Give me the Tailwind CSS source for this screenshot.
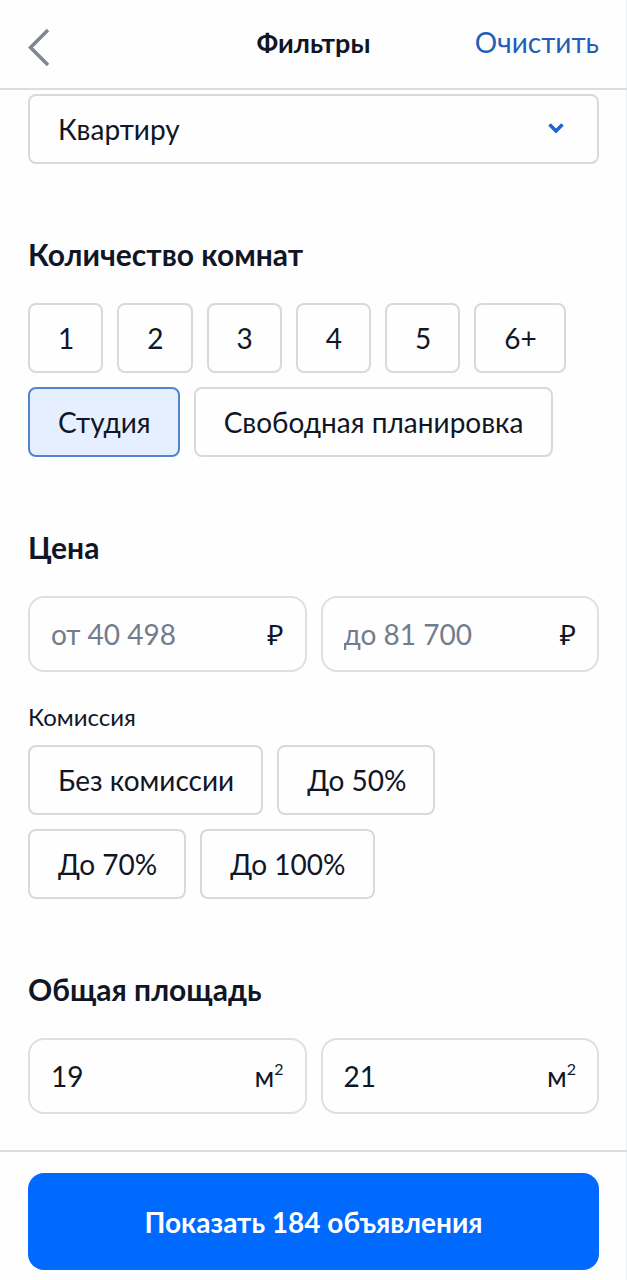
<!DOCTYPE html>
<html lang="ru">
<head>
    <meta charset="UTF-8">
    <meta name="viewport" content="width=device-width, initial-scale=1.0">
    <title>Фильтры</title>
    <script src="https://cdn.jsdelivr.net/npm/@tailwindcss/browser@4"></script>
    <style>
        body { font-family: 'Lato', 'Noto Sans', sans-serif; }
    </style>
</head>
<body class="min-h-screen flex flex-col bg-[#fefefe] text-[#111626] text-[28px] leading-8 shadow-[inset_-1px_0_0_#eef0f2]">

    <header class="grid grid-cols-3 items-center h-[90px] px-7 border-b-2 border-[#d9dee2]">
        <button type="button" aria-label="Назад" class="w-6 pt-1.5">
            <svg class="w-6 h-10" viewBox="0 0 24 40" fill="none" stroke="#808594" stroke-width="3.500">
                <path d="M20 3L2.500 20.500L20 38" />
            </svg>
        </button>
        <h1 class="pb-0.5 text-center font-bold text-[27px]">Фильтры</h1>
        <button type="button" class="justify-self-end pb-1 text-[#1f5fb8]">Очистить</button>
    </header>

    <main class="grow px-7 pt-1">
        <form id="filters">
            <div class="relative">
                <select aria-label="Тип жилья" class="appearance-none block w-full h-[70px] px-7 border-2 border-[#d5dadd] rounded-lg">
                    <option>Квартиру</option>
                    <option>Комнату</option>
                    <option>Дом</option>
                </select>
                <svg class="absolute right-[35px] top-7 w-4 h-3 pointer-events-none" viewBox="0 0 16 12" fill="none" stroke="#1a66cf" stroke-width="3.500">
                    <path d="M1.500 2.500L8 9L14.500 2.500" />
                </svg>
            </div>

            <!-- Rooms -->
            <fieldset class="mt-[70px]">
                <legend class="text-[30px] leading-10 font-bold">Количество комнат</legend>
                <div class="mt-[29px] flex flex-wrap gap-3.5">
                    <label class="relative flex items-center h-[70px] pl-7 pr-[27px] border-2 border-[#d5dadd] rounded-lg has-checked:bg-[#e6efff] has-checked:border-[#4d86cc]"><input type="checkbox" class="sr-only">1</label>
                    <label class="relative flex items-center h-[70px] pl-7 pr-[27px] border-2 border-[#d5dadd] rounded-lg has-checked:bg-[#e6efff] has-checked:border-[#4d86cc]"><input type="checkbox" class="sr-only">2</label>
                    <label class="relative flex items-center h-[70px] pl-7 pr-[27px] border-2 border-[#d5dadd] rounded-lg has-checked:bg-[#e6efff] has-checked:border-[#4d86cc]"><input type="checkbox" class="sr-only">3</label>
                    <label class="relative flex items-center h-[70px] pl-7 pr-[27px] border-2 border-[#d5dadd] rounded-lg has-checked:bg-[#e6efff] has-checked:border-[#4d86cc]"><input type="checkbox" class="sr-only">4</label>
                    <label class="relative flex items-center h-[70px] pl-7 pr-[27px] border-2 border-[#d5dadd] rounded-lg has-checked:bg-[#e6efff] has-checked:border-[#4d86cc]"><input type="checkbox" class="sr-only">5</label>
                    <label class="relative flex items-center h-[70px] pl-7 pr-[27px] border-2 border-[#d5dadd] rounded-lg has-checked:bg-[#e6efff] has-checked:border-[#4d86cc]"><input type="checkbox" class="sr-only">6+</label>
                    <label class="relative flex items-center h-[70px] pl-7 pr-[27px] border-2 border-[#d5dadd] rounded-lg has-checked:bg-[#e6efff] has-checked:border-[#4d86cc]"><input type="checkbox" class="sr-only" checked>Студия</label>
                    <label class="relative flex items-center h-[70px] pl-7 pr-[27px] border-2 border-[#d5dadd] rounded-lg has-checked:bg-[#e6efff] has-checked:border-[#4d86cc]"><input type="checkbox" class="sr-only">Свободная планировка</label>
                </div>
            </fieldset>

            <!-- Price -->
            <fieldset class="mt-[70px]">
                <legend class="text-[30px] leading-10 font-bold">Цена</legend>
                <div class="mt-[29px] grid grid-cols-2 gap-3.5">
                    <div class="flex items-center h-[76px] px-[21px] border-2 border-[#dbe0e2] rounded-2xl">
                        <input type="text" id="priceFrom" aria-label="Цена от" placeholder="от 40 498" class="grow min-w-0 outline-none placeholder:text-[#747c8c]">
                        <label for="priceFrom">₽</label>
                    </div>
                    <div class="flex items-center h-[76px] px-[21px] border-2 border-[#dbe0e2] rounded-2xl">
                        <input type="text" id="priceTo" aria-label="Цена до" placeholder="до 81 700" class="grow min-w-0 outline-none placeholder:text-[#747c8c]">
                        <label for="priceTo">₽</label>
                    </div>
                </div>
            </fieldset>

            <!-- Commission -->
            <fieldset class="mt-[29px]">
                <legend class="text-2xl">Комиссия</legend>
                <div class="mt-3 flex flex-wrap gap-3.5 pr-20">
                    <label class="relative flex items-center h-[70px] pl-7 pr-[27px] border-2 border-[#d5dadd] rounded-lg has-checked:bg-[#e6efff] has-checked:border-[#4d86cc]"><input type="radio" name="commission" class="sr-only">Без комиссии</label>
                    <label class="relative flex items-center h-[70px] pl-7 pr-[27px] border-2 border-[#d5dadd] rounded-lg has-checked:bg-[#e6efff] has-checked:border-[#4d86cc]"><input type="radio" name="commission" class="sr-only">До 50%</label>
                    <label class="relative flex items-center h-[70px] pl-7 pr-[27px] border-2 border-[#d5dadd] rounded-lg has-checked:bg-[#e6efff] has-checked:border-[#4d86cc]"><input type="radio" name="commission" class="sr-only">До 70%</label>
                    <label class="relative flex items-center h-[70px] pl-7 pr-[27px] border-2 border-[#d5dadd] rounded-lg has-checked:bg-[#e6efff] has-checked:border-[#4d86cc]"><input type="radio" name="commission" class="sr-only">До 100%</label>
                </div>
            </fieldset>

            <!-- Area -->
            <fieldset class="mt-[70px]">
                <legend class="text-[30px] leading-10 font-bold">Общая площадь</legend>
                <div class="mt-[29px] grid grid-cols-2 gap-3.5">
                    <div class="flex items-center h-[76px] px-[21px] border-2 border-[#dbe0e2] rounded-2xl">
                        <input type="text" id="areaFrom" aria-label="Площадь от" value="19" class="grow min-w-0 outline-none">
                        <label for="areaFrom">м<sup class="text-base -top-3">2</sup></label>
                    </div>
                    <div class="flex items-center h-[76px] px-[21px] border-2 border-[#dbe0e2] rounded-2xl">
                        <input type="text" id="areaTo" aria-label="Площадь до" value="21" class="grow min-w-0 outline-none">
                        <label for="areaTo">м<sup class="text-base -top-3">2</sup></label>
                    </div>
                </div>
            </fieldset>
        </form>
    </main>

    <footer class="px-7 pt-[21px] pb-2.5 border-t-2 border-[#d9dee2]">
        <button type="submit" form="filters" class="block w-full h-[97px] rounded-2xl bg-[#006aff] text-white font-bold">Показать 184 объявления</button>
    </footer>

</body>
</html>
